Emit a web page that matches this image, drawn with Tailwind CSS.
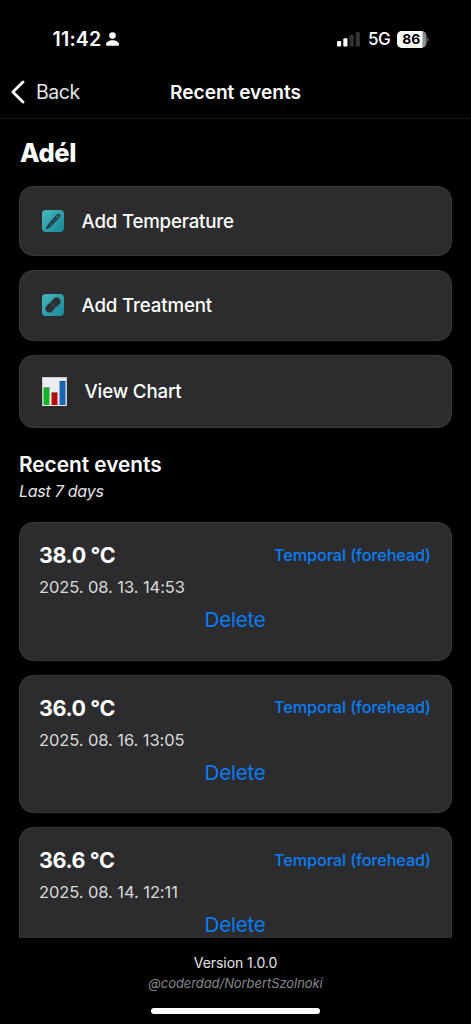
<!DOCTYPE html>
<html lang="en">
<head>
<meta charset="utf-8">
<title>Recent events</title>
<script src="https://cdn.jsdelivr.net/npm/@tailwindcss/browser@4"></script>
</head>
<body class="bg-black">
<div class="flex h-[1024px] w-[471px] flex-col overflow-hidden bg-black font-['Inter','Liberation_Sans',sans-serif] text-white">
  <!-- Status bar -->
  <div class="flex h-[66px] shrink-0 items-start justify-between pl-[52.500px] pr-[42px] pt-[27px]">
    <div class="flex h-6 items-center gap-[5px]">
      <span class="text-[19.5px] font-semibold leading-6 tracking-[0.2px]">11:42</span>
      <svg class="h-[14px] w-[13px]" viewBox="0 0 13 14" fill="#fff"><circle cx="6.5" cy="3.6" r="3.3"/><path d="M0 12.5C0 9.8 3 8.2 6.5 8.2S13 9.8 13 12.5c0 .9-.4 1.2-1.2 1.2H1.2C.4 13.7 0 13.400 0 12.500Z"/></svg>
    </div>
    <div class="flex h-6 items-center">
      <svg class="h-4 w-6" viewBox="0 0 24 16"><rect x="0" y="10" width="4.200" height="5.500" rx="1.200" fill="#fff"/><rect x="6.300" y="7.200" width="4.200" height="8.300" rx="1.200" fill="#fff"/><rect x="12.500" y="4" width="4.200" height="11.500" rx="1.200" fill="#333"/><rect x="18.700" y="1" width="4.200" height="14.500" rx="1.200" fill="#333"/></svg>
      <span class="ml-[7px] w-[22px] text-[17px] font-medium leading-6 tracking-[-0.600px]">5G</span>
      <svg class="ml-[7px] h-[17px] w-8" viewBox="0 0 32 17"><defs><clipPath id="b"><rect width="29.500" height="17" rx="5"/></clipPath></defs><g clip-path="url(#b)"><rect width="30" height="17" fill="#8a8a8d"/><rect width="25.500" height="17" fill="#fff"/></g><path d="M30.300 6.200c1.500.5 1.500 4.100 0 4.600Z" fill="#777"/><text x="14.200" y="13.400" text-anchor="middle" font-size="13.800" font-weight="700" fill="#000">86</text></svg>
    </div>
  </div>
  <!-- Navigation bar -->
  <div class="grid h-[53px] shrink-0 grid-cols-[1fr_auto_1fr] items-center border-b border-[#161616]">
    <div class="flex items-center pl-[11px]">
      <svg class="h-6 w-[14px]" viewBox="0 0 14 24" fill="none" stroke="#fff" stroke-width="2.800" stroke-linecap="round" stroke-linejoin="round"><path d="M12 2 1.900 12 12 22"/></svg>
      <span class="ml-[11px] text-[19.5px] leading-6 tracking-[-0.450px] text-[#e5e5e7]">Back</span>
    </div>
    <h1 class="text-[19.100px] font-semibold leading-6">Recent events</h1>
    <div></div>
  </div>
  <!-- Scrolling content -->
  <main class="h-[819px] shrink-0 overflow-hidden px-[19px] pt-[17px]">
    <h2 class="h-[50px] pl-px text-[25.500px] font-extrabold leading-[33px] tracking-[-0.400px]">Adél</h2>
    <div class="flex flex-col gap-[14px]">
      <div class="flex h-[70.300px] items-center rounded-[14px] border border-[#3a3a3c] bg-[#2c2c2e] pl-[22px]">
        <svg class="h-[23px] w-[23px]" viewBox="0 0 23 23"><defs><linearGradient id="g" x1="0" y1="0" x2="1" y2="1"><stop stop-color="#48b6bd"/><stop offset="1" stop-color="#168a9a"/></linearGradient></defs><rect width="22" height="22" rx="4" fill="url(#g)"/><path d="m4.300 18.200 2.200-3.200L14.800 5.200c2-2 4.200 0 2.400 2.100L8.300 16.300l-3.200 2Z" fill="#38777e" stroke="#233e45" stroke-width="1.300" stroke-linejoin="round"/><path d="m4.800 17.700 3-3M9.200 13l5-5.500" stroke="#233e45" stroke-width="1.300"/></svg>
        <span class="ml-[16.500px] pt-[2px] text-[18.700px] font-medium leading-6 tracking-[-0.200px]">Add Temperature</span>
      </div>
      <div class="flex h-[70.300px] items-center rounded-[14px] border border-[#3a3a3c] bg-[#2c2c2e] pl-[22px]">
        <svg class="h-[23px] w-[23px]" viewBox="0 0 23 23"><rect width="22" height="22" rx="4" fill="url(#g)"/><g transform="rotate(-45 11 11)"><rect x="2.100" y="7.100" width="17.800" height="7.800" rx="3.900" fill="#2c3034"/><path d="M11 7.100v7.800" stroke="#48717a" stroke-width=".8"/></g></svg>
        <span class="ml-[16.500px] pt-[2px] text-[18.700px] font-medium leading-6 tracking-[-0.150px]">Add Treatment</span>
      </div>
      <div class="flex h-[73.500px] items-center rounded-[14px] border border-[#3a3a3c] bg-[#2c2c2e] pl-[22px]">
        <svg class="h-[29px] w-[25px]" viewBox="0 0 25 29"><rect width="25" height="29" fill="#ececf0"/><path d="M.5 29V.5h24V29" fill="none" stroke="#c8c8cc"/><path d="M1.500 10.500H7.500V28H1.500Z" fill="#14b529"/><path d="M9.500 15.500H15.500V28H9.500Z" fill="#b80d0d"/><path d="M17.500 4H23.500V28H17.500Z" fill="#1767b5"/><path d="M1.500 11H7.500M9.500 16H15.500M17.500 4.500H23.500" stroke="#000" stroke-opacity=".25"/></svg>
        <span class="ml-[17.500px] pt-[2px] text-[18.700px] font-medium leading-6 tracking-[-0.150px]">View Chart</span>
      </div>
    </div>
    <h3 class="mt-[24px] text-[20.800px] font-semibold leading-[26px]">Recent events</h3>
    <p class="mt-[3px] h-[41px] text-[16px] italic leading-[20px] tracking-[-0.260px] text-[#e5e5e7]">Last 7 days</p>
    <div class="flex flex-col gap-[14px]">
      <article class="h-[138.600px] shrink-0 rounded-[14px] border border-[#3a3a3c] bg-[#2c2c2e] pl-[19px] pr-5 pt-[19px]">
        <div class="flex h-[26px] items-center justify-between"><span class="text-[21.500px] font-bold tracking-[-0.400px]">38.0 °C</span><span class="text-[16.300px] font-medium tracking-[-0.120px] text-[#0a7cf5]">Temporal (forehead)</span></div>
        <p class="mt-[8px] text-[16.500px] leading-[22px] tracking-[-0.080px] text-[#d9d9db]">2025. 08. 13. 14:53</p>
        <div class="mt-[9px] text-center text-[20.600px] leading-[26px] tracking-[-0.250px] text-[#0a7cf5]">Delete</div>
      </article>
      <article class="h-[138.600px] shrink-0 rounded-[14px] border border-[#3a3a3c] bg-[#2c2c2e] pl-[19px] pr-5 pt-[19px]">
        <div class="flex h-[26px] items-center justify-between"><span class="text-[21.500px] font-bold tracking-[-0.400px]">36.0 °C</span><span class="text-[16.300px] font-medium tracking-[-0.120px] text-[#0a7cf5]">Temporal (forehead)</span></div>
        <p class="mt-[8px] text-[16.500px] leading-[22px] tracking-[-0.080px] text-[#d9d9db]">2025. 08. 16. 13:05</p>
        <div class="mt-[9px] text-center text-[20.600px] leading-[26px] tracking-[-0.250px] text-[#0a7cf5]">Delete</div>
      </article>
      <article class="h-[138.600px] shrink-0 rounded-[14px] border border-[#3a3a3c] bg-[#2c2c2e] pl-[19px] pr-5 pt-[19px]">
        <div class="flex h-[26px] items-center justify-between"><span class="text-[21.500px] font-bold tracking-[-0.400px]">36.6 °C</span><span class="text-[16.300px] font-medium tracking-[-0.120px] text-[#0a7cf5]">Temporal (forehead)</span></div>
        <p class="mt-[8px] text-[16.500px] leading-[22px] tracking-[-0.080px] text-[#d9d9db]">2025. 08. 14. 12:11</p>
        <div class="mt-[9px] text-center text-[20.600px] leading-[26px] tracking-[-0.250px] text-[#0a7cf5]">Delete</div>
      </article>
    </div>
  </main>
  <!-- Footer and home indicator -->
  <footer class="flex flex-1 flex-col items-center pt-[16px]">
    <p class="text-[14px] leading-[18px] tracking-[-0.050px] text-[#e5e5e7]">Version 1.0.0</p>
    <p class="mt-[2px] text-[13px] italic leading-[18px] tracking-[-0.070px] text-[#858588]">@coderdad/NorbertSzolnoki</p>
    <div class="mt-[16px] h-[6px] w-[169px] rounded-full bg-white"></div>
  </footer>
</div>
</body>
</html>
